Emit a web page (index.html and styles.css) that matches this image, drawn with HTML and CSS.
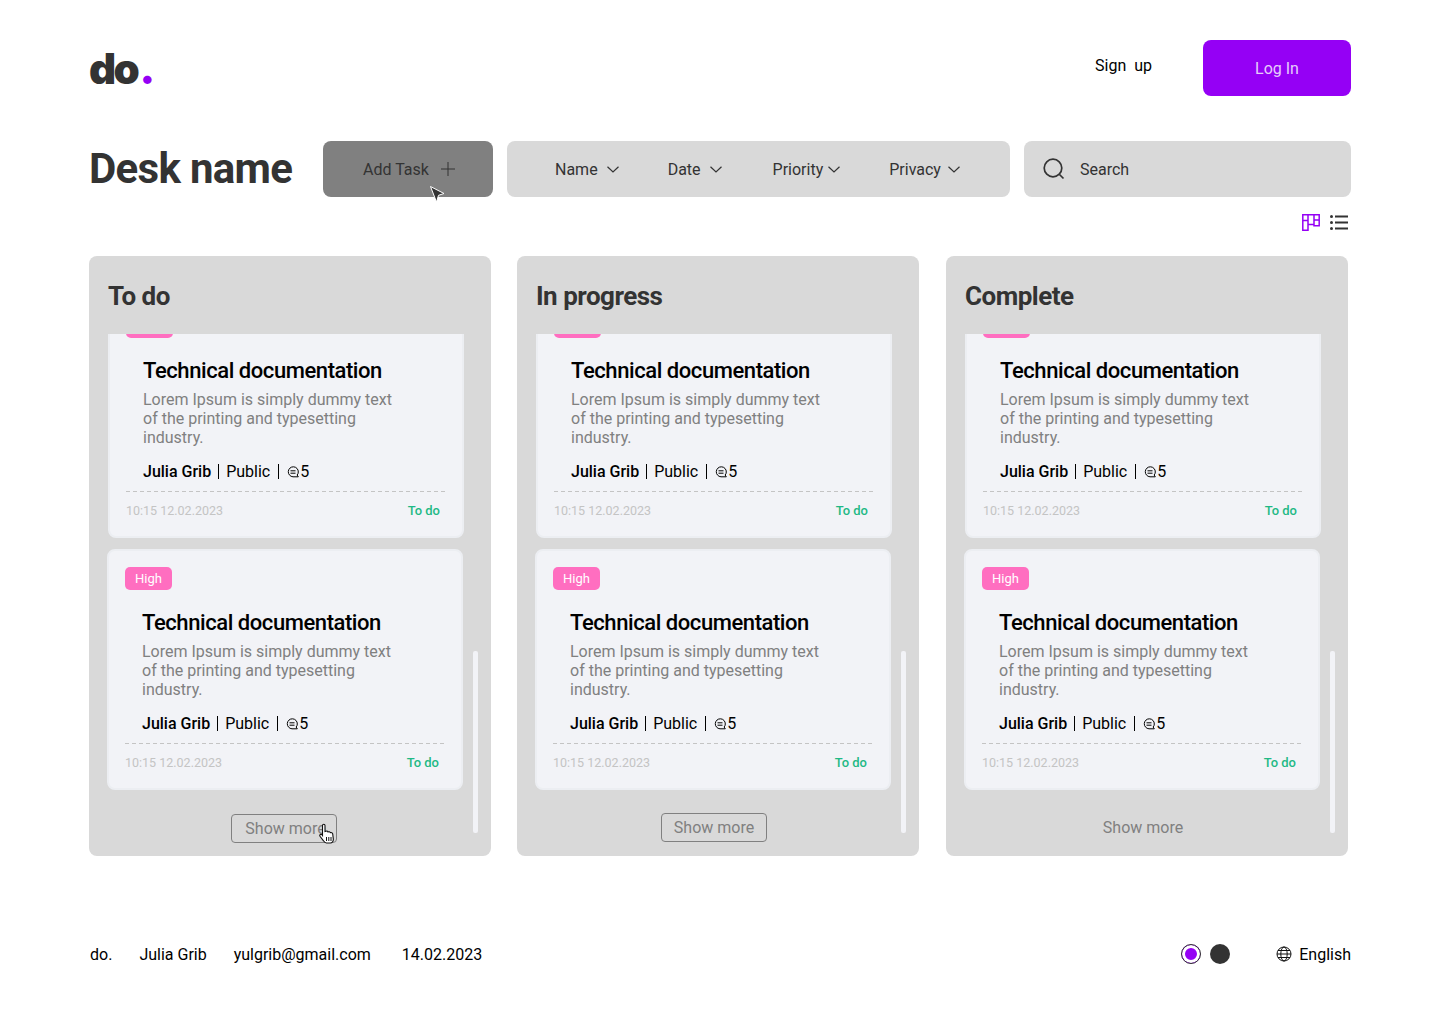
FILE: index.html
```html
<!DOCTYPE html>
<html lang="en">
<head>
    <meta charset="UTF-8">
    <meta name="viewport" content="width=device-width, initial-scale=1.0">
    <title>do. Desk name</title>
    <link rel="stylesheet" href="styles.css">
</head>
<body>
    <div class="page">
        <header class="top">
            <div class="logo">do<span class="logo-dot">.</span></div>
            <nav class="auth">
                <a class="sign-up">Sign up</a>
                <button class="log-in">Log In</button>
            </nav>
        </header>

        <section class="toolbar">
            <h1 class="desk-name">Desk name</h1>
            <button class="add-task">
                Add Task
                <svg class="plus-icon" width="14" height="14" viewBox="0 0 14 14"><path d="M7 0v14M0 7h14" fill="none" stroke="#333" stroke-width="1"/></svg>
                <svg class="cursor-arrow" width="18" height="20" viewBox="0 0 18 20"><path d="M2.500 1.500L16 8.500l-5.500 1.800L8.500 17z" fill="#333" stroke="#fff" stroke-width="1" stroke-linejoin="round"/></svg>
            </button>
            <div class="filters">
                <button class="filter">Name <svg class="chevron" width="12" height="7" viewBox="0 0 12 7"><path d="M.5.800L6 6l5.500-5.200" fill="none" stroke="#333" stroke-width="1.200"/></svg></button>
                <button class="filter">Date <svg class="chevron" width="12" height="7" viewBox="0 0 12 7"><path d="M.5.800L6 6l5.500-5.200" fill="none" stroke="#333" stroke-width="1.200"/></svg></button>
                <button class="filter filter-priority">Priority <svg class="chevron" width="12" height="7" viewBox="0 0 12 7"><path d="M.5.800L6 6l5.500-5.200" fill="none" stroke="#333" stroke-width="1.200"/></svg></button>
                <button class="filter filter-privacy">Privacy <svg class="chevron" width="12" height="7" viewBox="0 0 12 7"><path d="M.5.800L6 6l5.500-5.200" fill="none" stroke="#333" stroke-width="1.200"/></svg></button>
            </div>
            <div class="search">
                <svg width="22" height="22" viewBox="0 0 22 22"><circle cx="10" cy="10" r="8.800" fill="none" stroke="#333" stroke-width="1.700"/><path d="M16.500 16.500L20.500 20.500" stroke="#333" stroke-width="1.700"/></svg>
                <span>Search</span>
            </div>
        </section>

        <div class="view-toggle">
            <svg width="18" height="17" viewBox="0 0 18 17" fill="none" stroke="#9500f5" stroke-width="1.500"><path d="M.8.800h5.200v15.400H.8zM.8 6.500h5.200M6 .8h6v9.700H6zM12 .8h5.200v11H12zM12 6h5.200"/></svg>
            <svg width="18" height="15" viewBox="0 0 18 15"><circle cx="1.500" cy="1.500" r="1.500" fill="#333"/><circle cx="1.500" cy="7.500" r="1.500" fill="#333"/><circle cx="1.500" cy="13.500" r="1.500" fill="#333"/><path d="M5 1.500h13M5 7.500h13M5 13.500h13" stroke="#333" stroke-width="2"/></svg>
        </div>

        <main class="board">
            <section class="column">
                <h2 class="column-title">To do</h2>
                <div class="card-list">
                    <article class="card card-scrolled">
                        <span class="tag">High</span>
                        <h3 class="card-title">Technical documentation</h3>
                        <p class="card-text">Lorem Ipsum is simply dummy text of the printing and typesetting industry.</p>
                        <div class="meta"><b>Julia Grib</b><i class="sep"></i>Public<i class="sep sep-last"></i><svg class="comment-icon" width="12" height="12" viewBox="0 0 12 12"><path d="M11.300 10.800H6a5 5 0 1 1 5.300-4.800c0 1.300-.5 2.300-1.200 3z" fill="none" stroke="#000" stroke-width="1"/><path d="M3.500 4.800h5M3.500 7.200h5" stroke="#000" stroke-width="1"/></svg>5</div>
                        <div class="card-foot"><span class="card-date">10:15 12.02.2023</span><span class="card-status">To do</span></div>
                    </article>
                    <article class="card">
                        <span class="tag">High</span>
                        <h3 class="card-title">Technical documentation</h3>
                        <p class="card-text">Lorem Ipsum is simply dummy text of the printing and typesetting industry.</p>
                        <div class="meta"><b>Julia Grib</b><i class="sep"></i>Public<i class="sep sep-last"></i><svg class="comment-icon" width="12" height="12" viewBox="0 0 12 12"><path d="M11.300 10.800H6a5 5 0 1 1 5.300-4.800c0 1.300-.5 2.300-1.200 3z" fill="none" stroke="#000" stroke-width="1"/><path d="M3.500 4.800h5M3.500 7.200h5" stroke="#000" stroke-width="1"/></svg>5</div>
                        <div class="card-foot"><span class="card-date">10:15 12.02.2023</span><span class="card-status">To do</span></div>
                    </article>
                </div>
                <div class="column-foot">
                    <button class="show-more show-more-hover">Show more
                        <svg class="cursor-hand" width="18" height="22" viewBox="0 0 18 22"><path d="M3.500 2.500c0-1.600 2.500-1.600 2.500 0v6l1-.3c1-.3 1.800.1 2 .7 1-.4 2-.1 2.300.7 1-.3 2.200.2 2.400 1.300l.6 5c.2 2-1 4.100-3 4.100H7.500c-1.500 0-2.300-1-3-2.200L1 13.300c-.9-1.500 1-2.800 2-1.500l.5.700z" fill="#fff" stroke="#111" stroke-width="1.100"/><path d="M7.500 14v4M9.800 14v4M12 14v4" stroke="#111" stroke-width="1"/></svg>
                    </button>
                </div>
                <div class="scroll-thumb"></div>
            </section>

            <section class="column">
                <h2 class="column-title">In progress</h2>
                <div class="card-list">
                    <article class="card card-scrolled">
                        <span class="tag">High</span>
                        <h3 class="card-title">Technical documentation</h3>
                        <p class="card-text">Lorem Ipsum is simply dummy text of the printing and typesetting industry.</p>
                        <div class="meta"><b>Julia Grib</b><i class="sep"></i>Public<i class="sep sep-last"></i><svg class="comment-icon" width="12" height="12" viewBox="0 0 12 12"><path d="M11.300 10.800H6a5 5 0 1 1 5.300-4.800c0 1.300-.5 2.300-1.200 3z" fill="none" stroke="#000" stroke-width="1"/><path d="M3.500 4.800h5M3.500 7.200h5" stroke="#000" stroke-width="1"/></svg>5</div>
                        <div class="card-foot"><span class="card-date">10:15 12.02.2023</span><span class="card-status">To do</span></div>
                    </article>
                    <article class="card">
                        <span class="tag">High</span>
                        <h3 class="card-title">Technical documentation</h3>
                        <p class="card-text">Lorem Ipsum is simply dummy text of the printing and typesetting industry.</p>
                        <div class="meta"><b>Julia Grib</b><i class="sep"></i>Public<i class="sep sep-last"></i><svg class="comment-icon" width="12" height="12" viewBox="0 0 12 12"><path d="M11.300 10.800H6a5 5 0 1 1 5.300-4.800c0 1.300-.5 2.300-1.200 3z" fill="none" stroke="#000" stroke-width="1"/><path d="M3.500 4.800h5M3.500 7.200h5" stroke="#000" stroke-width="1"/></svg>5</div>
                        <div class="card-foot"><span class="card-date">10:15 12.02.2023</span><span class="card-status">To do</span></div>
                    </article>
                </div>
                <div class="column-foot">
                    <button class="show-more">Show more</button>
                </div>
                <div class="scroll-thumb"></div>
            </section>

            <section class="column column-last">
                <h2 class="column-title">Complete</h2>
                <div class="card-list">
                    <article class="card card-scrolled">
                        <span class="tag">High</span>
                        <h3 class="card-title">Technical documentation</h3>
                        <p class="card-text">Lorem Ipsum is simply dummy text of the printing and typesetting industry.</p>
                        <div class="meta"><b>Julia Grib</b><i class="sep"></i>Public<i class="sep sep-last"></i><svg class="comment-icon" width="12" height="12" viewBox="0 0 12 12"><path d="M11.300 10.800H6a5 5 0 1 1 5.300-4.800c0 1.300-.5 2.300-1.200 3z" fill="none" stroke="#000" stroke-width="1"/><path d="M3.500 4.800h5M3.500 7.200h5" stroke="#000" stroke-width="1"/></svg>5</div>
                        <div class="card-foot"><span class="card-date">10:15 12.02.2023</span><span class="card-status">To do</span></div>
                    </article>
                    <article class="card">
                        <span class="tag">High</span>
                        <h3 class="card-title">Technical documentation</h3>
                        <p class="card-text">Lorem Ipsum is simply dummy text of the printing and typesetting industry.</p>
                        <div class="meta"><b>Julia Grib</b><i class="sep"></i>Public<i class="sep sep-last"></i><svg class="comment-icon" width="12" height="12" viewBox="0 0 12 12"><path d="M11.300 10.800H6a5 5 0 1 1 5.300-4.800c0 1.300-.5 2.300-1.200 3z" fill="none" stroke="#000" stroke-width="1"/><path d="M3.500 4.800h5M3.500 7.200h5" stroke="#000" stroke-width="1"/></svg>5</div>
                        <div class="card-foot"><span class="card-date">10:15 12.02.2023</span><span class="card-status">To do</span></div>
                    </article>
                </div>
                <div class="column-foot">
                    <button class="show-more show-more-plain">Show more</button>
                </div>
                <div class="scroll-thumb"></div>
            </section>
        </main>

        <footer class="bottom">
            <div class="bottom-info">
                <span class="info-brand">do.</span>
                <span class="info-name">Julia Grib</span>
                <span class="info-mail">yulgrib@gmail.com</span>
                <span>14.02.2023</span>
            </div>
            <div class="bottom-settings">
                <span class="theme theme-active"></span>
                <span class="theme theme-dark"></span>
                <span class="language">
                    <svg width="16" height="16" viewBox="0 0 16 16" fill="none" stroke="#111" stroke-width="1"><circle cx="8" cy="8" r="7"/><ellipse cx="8" cy="8" rx="3.200" ry="7"/><path d="M1 8h14M2 4.500h12M2 11.500h12"/></svg>
                    English
                </span>
            </div>
        </footer>
    </div>
</body>
</html>
```

FILE: styles.css
```css
* {
    box-sizing: border-box;
}
body {
    font-family: Roboto, "Liberation Sans", sans-serif;
    background-color: #fff;
    color: #000;
    margin: 0;
    padding: 0;
}
button {
    font-family: inherit;
    border: none;
    cursor: pointer;
}
.page {
    width: 1440px;
    height: 1024px;
    padding: 40px 89px 0;
}

/* header */
.top {
    display: flex;
    justify-content: space-between;
    align-items: center;
    height: 56px;
}
.logo {
    font-family: Inter, Roboto, sans-serif;
    font-size: 42px;
    font-weight: 900;
    line-height: 56px;
    letter-spacing: -2.5px;
    color: #333;
    margin-top: 2px;
}
.logo-dot {
    color: #9500f5;
    margin-left: 2px;
}
.auth {
    display: flex;
    align-items: center;
    gap: 51px;
}
.sign-up {
    font-size: 16px;
    word-spacing: 4px;
    margin-top: -6px;
}
.log-in {
    width: 148px;
    height: 56px;
    background-color: #9500f5;
    color: #e6ccfb;
    border-radius: 8px;
    font-size: 16px;
}

/* toolbar */
.toolbar {
    display: flex;
    align-items: center;
    gap: 14px;
    margin-top: 45px;
    height: 56px;
}
.desk-name {
    flex: none;
    width: 220px;
    margin: -2px 0 0;
    font-size: 42px;
    font-weight: 700;
    letter-spacing: -0.7px;
    color: #333;
    white-space: nowrap;
}
.add-task {
    position: relative;
    flex: none;
    width: 170px;
    height: 56px;
    background-color: #808080;
    color: #333;
    border-radius: 8px;
    font-size: 16px;
    display: flex;
    align-items: center;
    padding-left: 40px;
    gap: 12px;
}
.cursor-arrow {
    position: absolute;
    left: 105px;
    top: 44px;
}
.filters {
    flex: none;
    width: 503px;
    height: 56px;
    background-color: #d9d9d9;
    border-radius: 8px;
    display: flex;
    align-items: center;
    gap: 49px;
    padding-left: 48px;
}
.filter {
    background: none;
    padding: 0;
    font-size: 16px;
    color: #333;
    display: flex;
    align-items: center;
    gap: 9px;
}
.filter-priority {
    margin-left: 2px;
    gap: 5px;
}
.filter-privacy {
    gap: 7px;
}
.search {
    flex: 1;
    height: 56px;
    background-color: #d9d9d9;
    border-radius: 8px;
    display: flex;
    align-items: center;
    gap: 15px;
    padding-left: 19px;
    font-size: 16px;
    color: #333;
}
.view-toggle {
    display: flex;
    justify-content: flex-end;
    align-items: center;
    gap: 10px;
    height: 18px;
    margin-top: 16px;
    padding-right: 3px;
}

/* board */
.board {
    display: flex;
    gap: 26px;
    margin-top: 25px;
}
.column {
    position: relative;
    width: 402px;
    height: 600px;
    background-color: #d9d9d9;
    border-radius: 8px;
    padding-left: 18px;
    display: flex;
    flex-direction: column;
}
.column-last {
    margin-left: 1px;
}
.column-title {
    margin: 0 0 0 1px;
    height: 78px;
    line-height: 80px;
    font-size: 26px;
    font-weight: 700;
    letter-spacing: -0.5px;
    color: #333;
}
.card-list {
    height: 456px;
    width: 360px;
    overflow: hidden;
}
.card {
    width: 356px;
    height: 241px;
    background-color: #f2f3f7;
    border: 2px solid #eceef2;
    border-radius: 8px;
    padding: 16px 17px 0 16px;
    position: relative;
}
.card-scrolled {
    margin: -37px 0 11px 1px;
}
.tag {
    display: block;
    width: 47px;
    height: 23px;
    line-height: 23px;
    text-align: center;
    background-color: #ff6ec0;
    color: #fff;
    font-size: 13px;
    border-radius: 5px;
}
.card-title {
    margin: 20px 0 0 17px;
    font-size: 22px;
    line-height: 26px;
    font-weight: 500;
    letter-spacing: -0.43px;
    color: #000;
}
.card-text {
    margin: 6px 0 0 17px;
    width: 260px;
    font-size: 16px;
    line-height: 19px;
    color: #808080;
}
.meta {
    display: flex;
    align-items: center;
    margin: 15px 0 0 17px;
    font-size: 16px;
    line-height: 19px;
}
.meta b {
    font-weight: 500;
}
.sep {
    width: 1px;
    height: 15px;
    background-color: #000;
    margin: 0 7px;
}
.sep-last {
    margin: 0 8px;
}
.comment-icon {
    margin-right: 1px;
}
.card-foot {
    display: flex;
    justify-content: space-between;
    align-items: center;
    margin-top: 10px;
    padding: 10px 5px 0 0;
    background: repeating-linear-gradient(90deg, #c4c4c4 0 4px, transparent 4px 7px) top left / 100% 1px no-repeat;
    line-height: 20px;
}
.card-date {
    font-size: 12.5px;
    color: #c4c4c4;
}
.card-status {
    font-size: 13px;
    color: #1fb985;
    font-weight: 500;
}
.column-foot {
    display: flex;
    justify-content: center;
    padding-right: 26px;
    margin-top: 23px;
}
.show-more {
    position: relative;
    width: 106px;
    height: 29px;
    padding: 0;
    background: none;
    border: 1px solid #808080;
    border-radius: 4px;
    font-size: 16px;
    color: #808080;
    text-align: center;
}
.show-more-hover {
    margin: 1px 0 0 -4px;
    padding-left: 3px;
    white-space: nowrap;
}
.show-more-plain {
    border-color: transparent;
}
.cursor-hand {
    position: absolute;
    left: 87px;
    top: 8px;
}
.scroll-thumb {
    position: absolute;
    left: 384px;
    top: 395px;
    width: 5px;
    height: 182px;
    background-color: #f2f3f7;
    border-radius: 2px;
}

/* footer */
.bottom {
    display: flex;
    justify-content: space-between;
    align-items: center;
    margin-top: 88px;
    font-size: 16px;
}
.bottom-info {
    display: flex;
    padding-left: 1px;
}
.info-brand {
    margin-right: 27px;
}
.info-name {
    margin-right: 27px;
}
.info-mail {
    margin-right: 31px;
}
.bottom-settings {
    display: flex;
    align-items: center;
}
.theme {
    width: 20px;
    height: 20px;
    border-radius: 50%;
    margin-right: 9px;
}
.theme-active {
    background-color: #9500f5;
    border: 1px solid #333;
    box-shadow: inset 0 0 0 3px #fff;
}
.theme-dark {
    background-color: #333;
    margin-right: 46px;
}
.language {
    display: flex;
    align-items: center;
    gap: 7px;
}
```
